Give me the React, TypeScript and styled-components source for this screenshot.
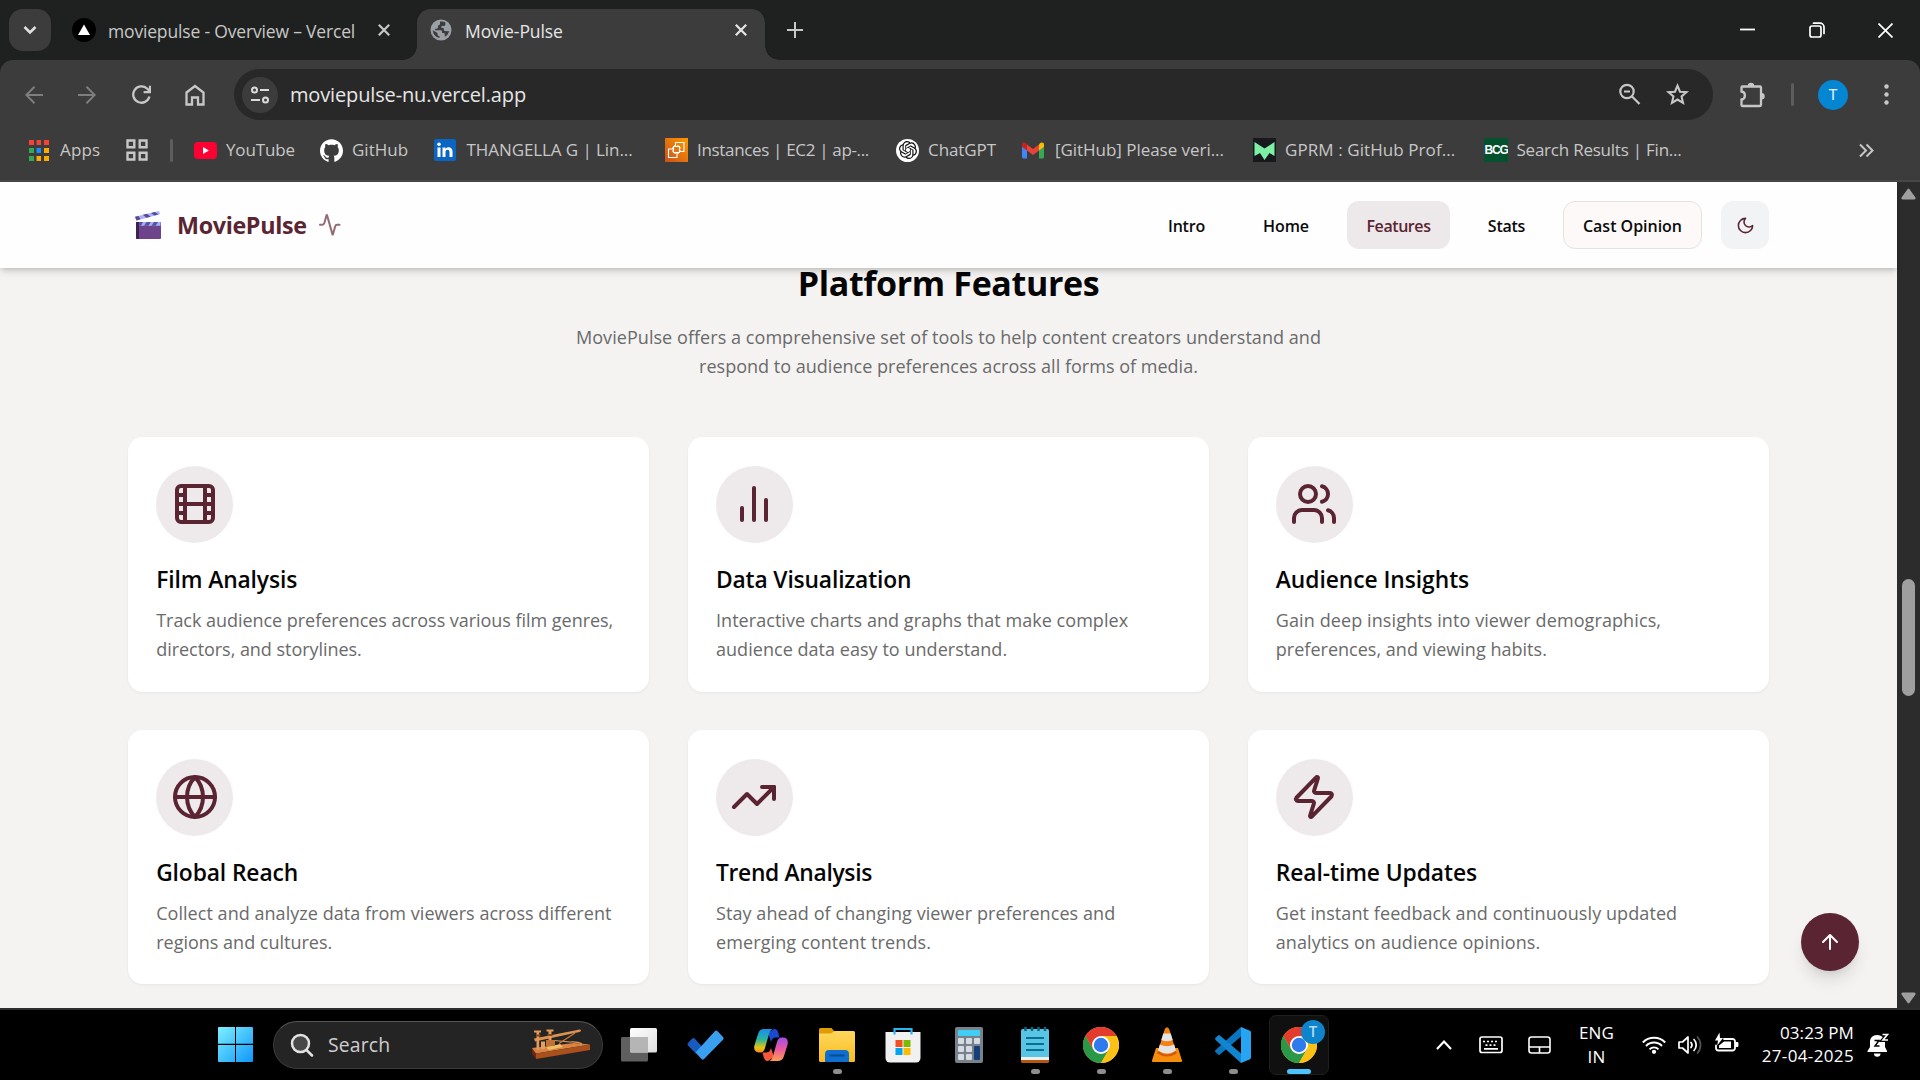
import React from 'react';
import styled, { createGlobalStyle, css } from 'styled-components';
import { SiGithub, SiOpenai } from 'react-icons/si';

const Global = createGlobalStyle`
  * { box-sizing: border-box; }
  body { margin: 0; background: #000; overflow: hidden; }
  svg { display: block; flex: none; }
`;

const wine = '#5a2432';

const Screen = styled.div`
  width: 1920px;
  height: 1080px;
  display: flex;
  flex-direction: column;
  overflow: hidden;
  font-family: 'Open Sans', 'Noto Sans', 'Segoe UI', sans-serif;
`;

const Label = styled.span<{ $ls?: number }>`
  letter-spacing: ${(p) => p.$ls ?? 0}px;
  white-space: nowrap;
`;

/* ---------- Browser tabs ---------- */

const TabStrip = styled.div`
  height: 60px;
  display: flex;
  align-items: flex-start;
  padding: 9px 0 0 9px;
  background: #1f2120;
`;

const TabSearch = styled.div`
  width: 42px;
  height: 42px;
  border-radius: 14px;
  background: #3c3c3c;
  display: grid;
  place-items: center;
`;

const Tab = styled.div<{ $active?: boolean }>`
  display: flex;
  align-items: center;
  height: 51px;
  font-size: 17.5px;
  line-height: 24px;
  padding-bottom: 9px;
  ${(p) =>
    p.$active
      ? css`
          position: relative;
          width: 348px;
          padding-left: 12px;
          padding-right: 18px;
          background: #3c3c3c;
          color: #e6e6e6;
          border-radius: 14px 14px 0 0;
          &::before,
          &::after {
            content: '';
            position: absolute;
            bottom: 0;
            width: 14px;
            height: 14px;
          }
          &::before {
            left: -14px;
            background: radial-gradient(circle at 0 0, transparent 13.5px, #3c3c3c 14px);
          }
          &::after {
            right: -14px;
            background: radial-gradient(circle at 100% 0, transparent 13.5px, #3c3c3c 14px);
          }
        `
      : css`
          width: 366px;
          padding-left: 21px;
          padding-right: 27px;
          color: #c7c7c7;
        `}
`;

const TabTitle = styled(Label)`
  flex: 1;
  margin-left: 12px;
  padding-top: 2px;
`;

const NewTab = styled.div`
  width: 60px;
  height: 42px;
  display: grid;
  place-items: center;
`;

const WindowButtons = styled.div`
  margin: 0 0 0 auto;
  height: 42px;
  display: flex;
`;

const WindowButton = styled.div`
  width: 69px;
  display: grid;
  place-items: center;
`;

/* ---------- Toolbar ---------- */

const ToolbarBack = styled.div`
  background: #1f2120;
`;

const Toolbar = styled.div`
  height: 122px;
  background: #3c3c3c;
  border-radius: 13px 13px 0 0;
  border-bottom: 2px solid #474747;
`;

const AddressRow = styled.div`
  height: 69px;
  padding-top: 9px;
  display: flex;
  align-items: flex-start;
`;

const NavButton = styled.div<{ $w: number }>`
  flex: none;
  width: ${(p) => p.$w}px;
  height: 51px;
  display: grid;
  place-items: center;
`;

const Kebab = styled.div`
  height: 51px;
  margin-left: 36px;
  display: grid;
  place-items: center;
`;

const AddressBar = styled.div`
  flex: none;
  width: 1479px;
  height: 51px;
  border-radius: 26px;
  background: #282828;
  display: flex;
  align-items: center;
  padding: 0 23px 0 8px;
  color: #e6e6e6;
  font-size: 20px;
  line-height: 26px;
`;

const SiteInfo = styled.div`
  width: 36px;
  height: 36px;
  border-radius: 50%;
  background: #3c3c3c;
  display: grid;
  place-items: center;
`;

const Url = styled(Label)`
  flex: 1;
  margin-left: 12px;
`;

const AddressIcons = styled.div`
  display: flex;
  align-items: center;
  gap: 24px;
`;

const Divider = styled.div<{ $m: string }>`
  width: 3px;
  height: 23px;
  border-radius: 2px;
  background: #5d5d5d;
  margin: ${(p) => p.$m};
`;

const Avatar = styled.div`
  width: 30px;
  height: 30px;
  margin-top: 11px;
  border-radius: 50%;
  background: #0586d3;
  color: #e8f4fb;
  font: 15px/30px Roboto, sans-serif;
  text-align: center;
`;

const BookmarkRow = styled.div`
  height: 42px;
  padding-left: 28px;
  display: flex;
  align-items: center;
  font-size: 17px;
  line-height: 24px;
  color: #c7c7c7;
`;

const Bookmark = styled.div<{ $w: number; $gap?: number }>`
  width: ${(p) => p.$w}px;
  display: flex;
  align-items: center;
  gap: ${(p) => p.$gap ?? 10}px;
`;

const BcgLogo = styled.div`
  width: 24px;
  height: 24px;
  background: #04512e;
  color: #fff;
  font: 700 12px/24px 'Liberation Sans', sans-serif;
  letter-spacing: -1.2px;
  text-align: center;
  overflow: hidden;
`;

const White = styled.div`
  width: 23px;
  height: 23px;
  border-radius: 50%;
  background: #fff;
  color: #111;
  display: grid;
  place-items: center;
`;

/* ---------- Page ---------- */

const Viewport = styled.div`
  height: 826px;
  display: flex;
  background: #f4f2f1;
`;

const Page = styled.main`
  width: 1897px;
  height: 826px;
  background: #f4f3f2;
  position: relative;
`;

const Header = styled.header`
  height: 86px;
  padding: 0 128px 0 135px;
  display: flex;
  align-items: center;
  justify-content: space-between;
  background: #fefefe;
  box-shadow: 0 5px 7px -1px rgba(0, 0, 0, 0.12), 0 2px 5px -2px rgba(0, 0, 0, 0.2);
  position: relative;
  z-index: 1;
`;

const Brand = styled.div`
  display: flex;
  align-items: center;
  color: ${wine};
  font-size: 23.3px;
  font-weight: 700;
  line-height: 32px;
`;

const BrandName = styled(Label)`
  margin: 0 11px 1px 16px;
`;

const Nav = styled.nav`
  display: flex;
  align-items: center;
  gap: 19px;
  font-size: 16px;
  font-weight: 600;
  line-height: 22px;
  color: #0a0a0a;
`;

const NavItem = styled.a<{ $w: number; $kind?: 'active' | 'outline' | 'icon' }>`
  width: ${(p) => p.$w}px;
  height: 48px;
  display: flex;
  align-items: center;
  justify-content: center;
  padding-top: 1px;
  border-radius: 12px;
  ${(p) => p.$kind === 'active' && `background: #ede9ea; color: ${wine};`}
  ${(p) => p.$kind === 'outline' && 'background: #fdf9f8; border: 1px solid #e6e2e2;'}
  ${(p) => p.$kind === 'icon' && 'background: #f2f3f5;'}
`;

const Section = styled.section`
  padding: 0 128px;
  display: flex;
  flex-direction: column;
  align-items: center;
`;

const Heading = styled.h2`
  margin: -6px 0 0;
  font-size: 34px;
  font-weight: 700;
  line-height: 43px;
  color: #050505;
`;

const Lead = styled.p`
  margin: 17.6px 0 0;
  display: flex;
  flex-direction: column;
  align-items: center;
  font-size: 18.05px;
  line-height: 29px;
  color: #6a6a6a;
`;

const Grid = styled.div`
  margin-top: 56.4px;
  width: 1641px;
  display: grid;
  grid-template-columns: repeat(3, 1fr);
  gap: 38.2px 38.4px;
`;

const Card = styled.article`
  height: 254.6px;
  padding: 28.8px 28.8px 0 28.2px;
  border-radius: 14.4px;
  background: #fff;
  box-shadow: 0 1px 3px rgba(0, 0, 0, 0.06);
`;

const Disc = styled.div`
  width: 77px;
  height: 77px;
  border-radius: 50%;
  background: #eeeaeb;
  display: grid;
  place-items: center;
`;

const CardTitle = styled.h3`
  margin: 20.4px 0 0;
  font-size: 22.8px;
  font-weight: 600;
  line-height: 33.6px;
  color: #050505;
`;

const CardText = styled.p`
  margin: 9px 0 0;
  display: flex;
  flex-direction: column;
  font-size: 18px;
  line-height: 29px;
  color: #6a6a6a;
`;

const ScrollTop = styled.button`
  position: absolute;
  right: 38px;
  bottom: 37px;
  width: 58px;
  height: 58px;
  padding: 0;
  border: 0;
  border-radius: 50%;
  background: ${wine};
  display: grid;
  place-items: center;
  box-shadow: 0 12px 18px -4px rgba(0, 0, 0, 0.12), 0 5px 8px -5px rgba(0, 0, 0, 0.12);
`;

const Scrollbar = styled.div`
  width: 23px;
  background: #2c2c2c;
  display: flex;
  flex-direction: column;
  align-items: center;
  padding: 6px 0 4px;
`;

const Thumb = styled.div`
  width: 13px;
  height: 117px;
  margin: 379px 0 auto;
  border-radius: 7px;
  background: #9f9f9f;
`;

/* ---------- Taskbar ---------- */

const Taskbar = styled.footer`
  height: 72px;
  border-top: 2px solid #2d2d2d;
  padding-bottom: 1px;
  background: #000;
  display: flex;
  align-items: center;
  color: #fff;
`;

const Start = styled.div`
  width: 273px;
  padding-left: 218px;
`;

const SearchBox = styled.div`
  width: 330px;
  height: 48px;
  border-radius: 24px;
  border: 1.5px solid #3a3a3a;
  border-top-color: #555;
  background: #242424;
  display: flex;
  align-items: center;
  padding: 0 11px 0 16px;
  font-size: 19.4px;
  line-height: 26px;
  color: #cfcfcf;
`;

const SearchLabel = styled(Label)`
  flex: 1;
  margin-left: 14px;
`;

const AppIcons = styled.div`
  display: flex;
  margin-left: 3px;
`;

const AppCell = styled.div`
  width: 66px;
  height: 60px;
  display: grid;
  place-items: center;
  position: relative;
`;

const ActiveTile = styled.div`
  width: 60px;
  height: 60px;
  border-radius: 7px;
  border: 1.5px solid #1e1e1e;
  background: #101010;
  display: grid;
  place-items: center;
`;

const Running = styled.i<{ $active?: boolean }>`
  position: absolute;
  bottom: 1px;
  left: calc(50% - ${(p) => (p.$active ? 12 : 4.5)}px);
  width: ${(p) => (p.$active ? 24 : 9)}px;
  height: 5px;
  border-radius: 3px;
  background: ${(p) => (p.$active ? '#4cc2ff' : '#8e8e8e')};
`;

const ProfileBadge = styled.b`
  position: absolute;
  left: 35px;
  top: 5px;
  width: 24px;
  height: 24px;
  border-radius: 50%;
  background: #0d84cb;
  color: #b9dcf2;
  font: 500 14px/24px Roboto, sans-serif;
  text-align: center;
`;

const Tray = styled.div`
  margin-left: auto;
  padding-right: 30px;
  display: flex;
  align-items: center;
  font-size: 17px;
  line-height: 23.5px;
`;

const TrayCell = styled.div<{ $w: number }>`
  width: ${(p) => p.$w}px;
  display: flex;
  flex-direction: column;
  align-items: center;
`;

const Clock = styled.div`
  width: 104px;
  display: flex;
  flex-direction: column;
  align-items: flex-end;
  padding-bottom: 1px;
  margin-right: 13px;
`;

/* ---------- Icons ---------- */

type StrokeProps = { s: number; w?: number; c?: string; children: React.ReactNode; vb?: string; butt?: boolean };
const Stroke = ({ s, w = 2, c = wine, children, vb = '0 0 24 24', butt }: StrokeProps) => (
  <svg width={s} height={s} viewBox={vb} fill="none" stroke={c} strokeWidth={w}
    strokeLinecap={butt ? 'butt' : 'round'} strokeLinejoin={butt ? 'miter' : 'round'}>
    {children}
  </svg>
);

const CloseIcon = ({ c }: { c: string }) => (
  <Stroke s={12} w={2.2} c={c} vb="0 0 12 12" butt><path d="M.8.8l10.4 10.4M11.2.8L.8 11.2" /></Stroke>
);

const Clapper = () => (
  <svg width="26" height="28" viewBox="0 0 26 28">
    <path d="M0 5.8 24 0l1 3.2L1.5 9.4z" fill="#a6b1ff" />
    <path d="M0 5.8l3.5-.9 2 3.4-4 1.1zM8 3.8l4-1 3.6 3-4.2 1zM16 1.9l4-1 3.4 2.7-4 1z" fill="#5b4a8c" />
    <rect x="1" y="11" width="25" height="17" rx="1" fill="#6d448c" />
    <path d="M4 11h21.5v3.8H4z" fill="#9cb2fa" />
    <path d="M4 11h4l-2 3.8H4zM11.500 11h4.300l-2.300 3.800H9zM19 11h4l-2.300 3.800h-4.200z" fill="#5f4f9a" />
    <path d="M1 11h3v17H2a1 1 0 0 1-1-1z" fill="#3c2350" />
  </svg>
);

const Chrome = () => (
  <svg width="36" height="36" viewBox="0 0 48 48">
    <circle cx="24" cy="24" r="24" fill="#fbc116" />
    <path d="M3.200 12A24 24 0 0 1 44.800 12H24L13.600 30z" fill="#e33b2e" />
    <path d="M3.200 12A24 24 0 0 0 24 48L34.400 30H13.600z" fill="#2b9847" />
    <path d="M24 12h20.800A24 24 0 0 1 24 48l10.400-18z" fill="#fbc116" />
    <circle cx="24" cy="24" r="12" fill="#fff" />
    <circle cx="24" cy="24" r="9.600" fill="#2f7bee" />
  </svg>
);

const Morse = () => (
  <svg width="59" height="31" viewBox="0 0 59 31">
    <path d="M0 19l4 5v6l-4-5z" fill="#6e2712" />
    <path d="M0 19l42-5 16 1.500L4 24.500z" fill="#d98445" />
    <path d="M4 24.500l54-9v5.500L4 30z" fill="#a9501d" />
    <path d="M14 18.500l14-3.500 3 3-14 3z" fill="#edc163" />
    <path d="M2 9.500L44 1.200q5-1.400 5 .3t-4 2L3 12.500z" fill="#dc924f" />
    <path d="M22 11.500l16 1.500q8-.5 12 2" stroke="#e09a58" strokeWidth="1.200" fill="none" />
    <path d="M27 14.500L43 4" stroke="#c9793a" strokeWidth="1.200" />
    <path d="M2 1.500h7v2H7.200V21H4.500V3.500H2z" fill="#df9a5c" />
    <path d="M14.500.5h7v2h-2V15h-3V2.500h-2z" fill="#df9a5c" />
    <path d="M4 5.500h4.500v2H4zM15.500 5h5v2h-5z" fill="#8c4519" />
    <path d="M9 12.500h4V20H9z" fill="#e3a064" />
    <path d="M14 11h9v6h-9z" fill="#bf7233" />
  </svg>
);

const icons = {
  film: <><rect width="18" height="18" x="3" y="3" rx="2" /><path d="M7 3v18M3 7.500h4M3 12h18M3 16.500h4M17 3v18M17 7.500h4M17 16.500h4" /></>,
  chart: <path d="M12 20V4M18 20V10M6 20v-6" />,
  users: <><path d="M16 21v-2a4 4 0 0 0-4-4H6a4 4 0 0 0-4 4v2" /><circle cx="9" cy="7" r="4" /><path d="M22 21v-2a4 4 0 0 0-3-3.870M16 3.130a4 4 0 0 1 0 7.750" /></>,
  globe: <><circle cx="12" cy="12" r="10" /><path d="M12 2a14.500 14.500 0 0 0 0 20 14.500 14.500 0 0 0 0-20M2 12h20" /></>,
  trend: <><path d="M22 7l-8.500 8.500-5-5L2 17" /><path d="M16 7h6v6" /></>,
  zap: <path d="M4 14a1 1 0 0 1-.78-1.630l9.900-10.200a.5.5 0 0 1 .86.460l-1.920 6.020A1 1 0 0 0 13 10h7a1 1 0 0 1 .78 1.630l-9.900 10.200a.5.5 0 0 1-.86-.460l1.920-6.020A1 1 0 0 0 11 14z" />,
};

type Line = [string, number];
const features: { icon: keyof typeof icons; title: Line; text: Line[] }[] = [
  { icon: 'film', title: ['Film Analysis', -0.11], text: [['Track audience preferences across various film genres,', -0.038], ['directors, and storylines.', -0.04]] },
  { icon: 'chart', title: ['Data Visualization', -0.15], text: [['Interactive charts and graphs that make complex', 0.05], ['audience data easy to understand.', 0.04]] },
  { icon: 'users', title: ['Audience Insights', -0.05], text: [['Gain deep insights into viewer demographics,', 0.1], ['preferences, and viewing habits.', 0.02]] },
  { icon: 'globe', title: ['Global Reach', -0.11], text: [['Collect and analyze data from viewers across different', 0.042], ['regions and cultures.', 0]] },
  { icon: 'trend', title: ['Trend Analysis', -0.31], text: [['Stay ahead of changing viewer preferences and', 0.078], ['emerging content trends.', 0.11]] },
  { icon: 'zap', title: ['Real-time Updates', -0.08], text: [['Get instant feedback and continuously updated', 0.085], ['analytics on audience opinions.', 0.07]] },
];

const gray = '#c7c7c7';

const bookmarks: { w: number; gap?: number; ls: number; text: string; icon: React.ReactNode }[] = [
  { w: 126, gap: 9, ls: -0.13, text: 'YouTube', icon: <svg width="23" height="17" viewBox="0 0 23 17"><rect width="23" height="17" rx="4" fill="#ff0033" /><path d="M9 5l6 3.500L9 12z" fill="#fff" /></svg> },
  { w: 114, gap: 9, ls: 0, text: 'GitHub', icon: <SiGithub size={23} color="#fff" /> },
  { w: 231, gap: 10.5, ls: -0.08, text: 'THANGELLA G | Lin...', icon: <svg width="22" height="22" viewBox="0 0 22 22"><rect width="22" height="22" rx="2" fill="#0a66c2" /><path d="M3.500 8.500h3V18h-3zM8.500 8.500h3V10c1.600-2.700 7-2.300 7 2.500V18h-3v-5c0-3-4-2.800-4 0v5h-3z" fill="#fff" /><circle cx="5" cy="5.200" r="1.800" fill="#fff" /></svg> },
  { w: 231, gap: 9, ls: -0.33, text: 'Instances | EC2 | ap-...', icon: (
    <svg width="23" height="24" viewBox="0 0 23 24"><defs><linearGradient id="ec2" x1="0" y1="1" x2="1" y2="0"><stop stopColor="#c8511b" /><stop offset="1" stopColor="#f90" /></linearGradient></defs><rect width="23" height="24" fill="url(#ec2)" /><path d="M8.500 8.500h6v6h-6zM10.500 8V4.500H19v9h-4M8 11H3.500v8.500H12V15M10 7v1.500M13 7v1.500M10 14.500V16M13 14.500V16M7 10h1.500M7 13h1.500M14.500 10H16M14.500 13H16" fill="none" stroke="#fff" strokeWidth="1.100" /></svg>
  ) },
  { w: 126, gap: 9, ls: -0.08, text: 'ChatGPT', icon: <White><SiOpenai size={18} /></White> },
  { w: 231, gap: 11, ls: -0.04, text: '[GitHub] Please veri...', icon: (
    <svg width="22" height="17" viewBox="0 0 22 17"><path d="M0 2.500V15a1.500 1.500 0 0 0 1.500 1.500H5V6z" fill="#4285f4" /><path d="M17 6v10.500h3.500A1.500 1.500 0 0 0 22 15V2.500z" fill="#34a853" /><path d="M5 2.500v6l6 4.500 6-4.500v-6L11 7z" fill="#ea4335" /><path d="M0 2.500v2.200l5 3.800v-6L4 1.200C2-.2 0 .7 0 2.500z" fill="#c5221f" /><path d="M22 2.500v2.200l-5 3.800v-6l1-1.300c2-1.400 4-.5 4 1.300z" fill="#fbbc04" /></svg>
  ) },
  { w: 231, gap: 9, ls: 0.08, text: 'GPRM : GitHub Prof...', icon: <svg width="23" height="24" viewBox="0 0 23 24"><rect width="23" height="24" fill="#17191c" /><path d="M1.500 4l10 6.500 10-6.500v14l-5-3-5 7-4.500-7-5.500 3z" fill="#7df0a6" /></svg> },
  { w: 375, gap: 8.5, ls: -0.23, text: 'Search Results | Fin...', icon: <BcgLogo>BCG</BcgLogo> },
];

const StoreBag = () => (
  <svg width="36" height="36" viewBox="0 0 36 36"><path d="M9.500 8V2h17v6" fill="none" stroke="#29b6f0" strokeWidth="2.200" /><path d="M.5 5h35v26a4.500 4.500 0 0 1-4.500 4.500H5A4.500 4.500 0 0 1 .5 31z" fill="#f1f1f1" /><path d="M9.500 7.500V5M26.500 7.500V5" stroke="#29b6f0" strokeWidth="2.200" /><path d="M10.500 13h7v7h-7z" fill="#f25022" /><path d="M18.500 13h7v7h-7z" fill="#7fba00" /><path d="M10.500 21h7v7h-7z" fill="#00a4ef" /><path d="M18.500 21h7v7h-7z" fill="#ffb900" /></svg>
);

const apps: { icon: React.ReactNode; running?: boolean }[] = [
  { icon: <svg width="36" height="34" viewBox="0 0 36 34"><defs><linearGradient id="tv1" x1="0" y1="0" x2="1" y2="1"><stop stopColor="#fff" /><stop offset="1" stopColor="#dedede" /></linearGradient></defs><rect x="0" y="9" width="27" height="24.500" rx="1.500" fill="#5f5f5f" /><rect x="9" y="0" width="27" height="24.500" rx="1.500" fill="url(#tv1)" /><path d="M9 9h18v15.500H10.500A1.500 1.500 0 0 1 9 23z" fill="#b5b5b5" /></svg> },
  { icon: <svg width="37" height="30" viewBox="0 0 37 30"><path d="M1 15.500a2 2 0 0 1 0-2.500l4-4.200a2 2 0 0 1 2.800 0L15.500 17 9 23.800z" fill="#195abd" /><path d="M8.500 22.500L27.800 1.300a2 2 0 0 1 2.800 0L36 7a2 2 0 0 1 0 2.700L17.300 28.700a2 2 0 0 1-3 0z" fill="#3b9ff0" /></svg> },
  { icon: (
    <svg width="34" height="32" viewBox="0 0 34 32"><defs><linearGradient id="cp1" x1="0" y1="0" x2="0" y2="1"><stop stopColor="#1a8dee" /><stop offset=".45" stopColor="#2bb59a" /><stop offset=".8" stopColor="#e9c50c" /><stop offset="1" stopColor="#f88a2c" /></linearGradient><linearGradient id="cp2" x1="0" y1="0" x2="0" y2="1"><stop stopColor="#a14ee8" /><stop offset=".5" stopColor="#ea5aa0" /><stop offset="1" stopColor="#fda04e" /></linearGradient></defs>
      <path d="M20 0c3 0 3.800 1.800 4.500 4.500l1 4H22c-3 0-4 1.500-5 4.500L14 4z" fill="#1b48ce" /><path d="M14 32c-3 0-3.800-1.800-4.500-4.500l-1-4H12c3 0 4-1.500 5-4.500l3 9z" fill="#f5583c" />
      <path d="M10.500 0H20c-3 0-4 2-5 5l-4 14c-.9 3-2 4.500-5 4.500H5c-4 0-5.500-3-4.600-7L4 5C5 1.500 7 0 10.500 0z" fill="url(#cp1)" /><path d="M23.500 32H14c3 0 4-2 5-5l4-14c.9-3 2-4.500 5-4.500h1c4 0 5.500 3 4.600 7L30 27c-1 3.500-3 5-6.500 5z" fill="url(#cp2)" /></svg>
  ) },
  { running: true, icon: <svg width="36" height="34" viewBox="0 0 36 34"><defs><linearGradient id="fd" x1="0" y1="0" x2="0" y2="1"><stop stopColor="#ffd75e" /><stop offset="1" stopColor="#f9bd1f" /></linearGradient></defs><path d="M0 1.500A1.500 1.500 0 0 1 1.500 0h11l3 3.500H20V12H0z" fill="#df9c05" /><path d="M0 5.500h12L15.500 3H34.500A1.500 1.500 0 0 1 36 4.500v28a1.500 1.500 0 0 1-1.500 1.500h-33A1.500 1.500 0 0 1 0 32.500z" fill="url(#fd)" /><path d="M6 34V26a4 4 0 0 1 4-4h16a4 4 0 0 1 4 4v8z" fill="#0f6fd0" /><path d="M10.500 27.500h15" stroke="#0a4a93" strokeWidth="2" /></svg> },
  { icon: <StoreBag /> },
  { icon: <svg width="28" height="36" viewBox="0 0 28 36"><rect width="28" height="36" rx="2" fill="#78828b" /><rect x="3" y="3" width="22" height="6" rx="1" fill="#42cdf5" /><g fill="#d4dbe2"><rect x="3" y="11" width="6" height="6" rx="1" /><rect x="11" y="11" width="6" height="6" rx="1" /><rect x="19" y="11" width="6" height="6" rx="1" /><rect x="3" y="19" width="6" height="6" rx="1" /><rect x="11" y="19" width="6" height="6" rx="1" /><rect x="3" y="27" width="6" height="6" rx="1" /><rect x="11" y="27" width="6" height="6" rx="1" /></g><rect x="19" y="19" width="6" height="14" rx="1" fill="#153f78" /></svg> },
  { running: true, icon: <svg width="28" height="36" viewBox="0 0 28 36"><rect y="2" width="28" height="32" rx="1.500" fill="#58c5e4" /><path d="M0 30h28v4.500a1.500 1.500 0 0 1-1.500 1.500h-25A1.500 1.500 0 0 1 0 34.500z" fill="#b5560f" /><path d="M0 30h28v3H0z" fill="#eee" /><path d="M4.500 0v4M11 0v4M17.500 0v4M24 0v4" stroke="#0b6686" strokeWidth="2.500" /><path d="M5 11h18M5 17h18M5 23h18" stroke="#0b6f93" strokeWidth="2" /></svg> },
  { running: true, icon: <Chrome /> },
  { running: true, icon: <svg width="30" height="35" viewBox="0 0 30 35"><path d="M4 21h22l4 12.500a1 1 0 0 1-1 1.500H1a1 1 0 0 1-1-1.500z" fill="#f78d0c" /><path d="M12.800 2Q15-1.500 17.200 2L24 24q-9 7-18 0z" fill="#f57f10" /><path d="M11.300 6.500h7.400l2 6.500q-5.700 2.500-11.400 0zM7.800 17.500q7.200 3.500 14.400 0l1.800 6q-9 6-18 0z" fill="#e4e4e4" /><path d="M6 24q9 7 18 0l.8 2.500q-9.800 6-19.600 0z" fill="#d4570c" /></svg> },
  { running: true, icon: <svg width="36" height="36" viewBox="0 0 36 36"><path d="M26 0v9.500L5 27.500a1.500 1.500 0 0 1-2 0L.6 25.300a1.500 1.500 0 0 1 0-2.200z" fill="#0a75bd" /><path d="M26 36v-9.500L5 8.500a1.500 1.500 0 0 0-2 0L.6 10.700a1.500 1.500 0 0 0 0 2.200z" fill="#1185cf" /><path d="M26 0l9 3.800a2 2 0 0 1 1 1.800v24.800a2 2 0 0 1-1 1.800L26 36z" fill="#27a4f2" /></svg> },
];

export default function App() {
  return (
    <Screen>
      <Global />
      <TabStrip>
        <TabSearch><Stroke s={14} w={2.600} c="#e0e0e0" vb="0 0 14 14" butt><path d="M1.500 4L7 9.500 12.500 4" /></Stroke></TabSearch>
        <Tab>
          <svg width="24" height="24" viewBox="0 0 24 24"><circle cx="12" cy="12" r="12" fill="#000" /><path d="M12 6.500l6 10.500H6z" fill="#fff" /></svg>
          <TabTitle $ls={-0.17}>moviepulse - Overview – Vercel</TabTitle>
          <CloseIcon c={gray} />
        </Tab>
        <Tab $active>
          <svg width="24" height="24" viewBox="0 0 24 24"><circle cx="12" cy="12" r="10.500" fill="#9aa0a6" /><path d="M11 3.600v2.200c0 1.200-1 1.600-2 1.700v2c0 .8-.6 1.200-1.400 1.200H6v1.500h5.500c1 0 1.500.6 1.500 1.500V15h1.500c.7 0 1.200.4 1.200 1.200v2.500a8.300 8.300 0 0 0 4.500-5.500l-4.200-.2c-.8 0-1.200-.5-1.200-1.200V10h-2.300V8h2.300c1 0 1.500-.6 1.500-1.500V4.200A8.400 8.400 0 0 0 11 3.600zM3.700 12.300A8.400 8.400 0 0 0 10.500 20v-1.800c-1.200 0-2-.8-2-2V15z" fill="#3c3c3c" /></svg>
          <TabTitle $ls={-0.08}>Movie-Pulse</TabTitle>
          <CloseIcon c="#e6e6e6" />
        </Tab>
        <NewTab><Stroke s={16} w={2} c={gray} vb="0 0 16 16" butt><path d="M8 0v16M0 8h16" /></Stroke></NewTab>
        <WindowButtons>
          <WindowButton><Stroke s={15} w={1.800} c="#fff" vb="0 0 15 15" butt><path d="M0 6.500h15" /></Stroke></WindowButton>
          <WindowButton><Stroke s={16} w={1.700} c="#fff" vb="0 0 16 16"><rect x="1" y="4" width="11" height="11" rx="2" /><path d="M4.500 1.200H11A4 4 0 0 1 15 5v6.500" /></Stroke></WindowButton>
          <WindowButton><Stroke s={15} w={1.700} c="#fff" vb="0 0 15 15" butt><path d="M.5.5l14 14M14.500.5l-14 14" /></Stroke></WindowButton>
        </WindowButtons>
      </TabStrip>

      <ToolbarBack>
        <Toolbar>
          <AddressRow>
            <NavButton $w={67}><Stroke s={18} w={2} c="#7e7e7e" vb="0 0 18 18" butt><path d="M18 9H1.500M9.500.8L1.300 9l8.200 8.200" /></Stroke></NavButton>
            <NavButton $w={40}><Stroke s={18} w={2} c="#7e7e7e" vb="0 0 18 18" butt><path d="M0 9h16.500M8.500.8L16.700 9l-8.200 8.200" /></Stroke></NavButton>
            <NavButton $w={68}><Stroke s={19} w={2.300} c={gray} vb="0 0 19 19" butt><path d="M17.400 11.500A8.200 8.200 0 1 1 15 3.500l2.700 2.700M18 .8v6.400h-6.400" /></Stroke></NavButton>
            <NavButton $w={40}><Stroke s={22} w={2.300} c={gray} vb="0 0 22 22" butt><path d="M2.500 8.500L11 2l8.500 6.500V20.500H14v-7H8v7H2.500z" /></Stroke></NavButton>
            <NavButton $w={19} />
            <AddressBar>
              <SiteInfo><Stroke s={18} w={2} c="#dcdcdc" vb="0 0 18 18" butt><circle cx="3.500" cy="4" r="2.500" /><path d="M9 4h9M0 14h9" /><circle cx="14.500" cy="14" r="2.500" /></Stroke></SiteInfo>
              <Url $ls={-0.143}>moviepulse-nu.vercel.app</Url>
              <AddressIcons>
                <Stroke s={23} w={2.200} c={gray} vb="0 0 23 23" butt><circle cx="9" cy="8.500" r="6.700" /><path d="M13.800 13.300L21.500 21M6 8.500h6" /></Stroke>
                <Stroke s={25} w={2} c={gray} vb="0 0 24 24" butt><path d="M12 3.500l2.400 5.800 6.200.5-4.700 4.100 1.400 6.100L12 16.800 6.700 20l1.400-6.100-4.700-4.100 6.200-.5z" /></Stroke>
              </AddressIcons>
            </AddressBar>
            <NavButton $w={78}>
              <svg width="26" height="26" viewBox="0 0 26 26"><path d="M3.500 4.500H21a1 1 0 0 1 1 1V23a1 1 0 0 1-1 1H3.500a1 1 0 0 1-1-1v-5.500c4.500-.5 4.500-7.500 0-8V5.500a1 1 0 0 1 1-1z" fill="none" stroke={gray} strokeWidth="2.300" /><path d="M8.800 4a3.200 3.200 0 0 1 6.400 0zM22.500 11a3.200 3.200 0 0 1 0 6.400z" fill={gray} /></svg>
            </NavButton>
            <Divider $m="14px 24px 0 0" />
            <Avatar>T</Avatar>
            <Kebab><svg width="5" height="21" viewBox="0 0 5 21" fill={gray}><circle cx="2.500" cy="2.500" r="2.200" /><circle cx="2.500" cy="10.500" r="2.200" /><circle cx="2.500" cy="18.500" r="2.200" /></svg></Kebab>
          </AddressRow>
          <BookmarkRow>
            <Bookmark $w={98} $gap={11}>
              <svg width="21" height="21" viewBox="0 0 21 21"><path d="M1 0h5v5H1zM8.500 0h4.500v5H8.500zM16 0h5v5h-5z" fill="#f44336" /><path d="M1 8h5v5H1zM1 16h5v5H1z" fill="#34a853" /><path d="M8.500 8h4.500v5H8.500z" fill="#1a8cff" /><path d="M16 8h5v5h-5zM8.500 16h4.500v5H8.500zM16 16h5v5h-5z" fill="#fbab04" /></svg>
              <Label $ls={0.15}>Apps</Label>
            </Bookmark>
            <Stroke s={22} w={2.400} c={gray} vb="0 0 22 22" butt><path d="M1.500 1.500h6.800v6.800H1.500zM13.700 1.500h6.800v6.800h-6.800zM1.500 13.700h6.800v6.800H1.500zM13.700 13.700h6.800v6.800h-6.800z" /></Stroke>
            <Divider $m="0 21px 0 22px" />
            {bookmarks.map((b) => (
              <Bookmark key={b.text} $w={b.w} $gap={b.gap}>{b.icon}<Label $ls={b.ls}>{b.text}</Label></Bookmark>
            ))}
            <Stroke s={15} w={2} c={gray} vb="0 0 15 15" butt><path d="M1 1.500l6 6-6 6M7.500 1.500l6 6-6 6" /></Stroke>
          </BookmarkRow>
        </Toolbar>
      </ToolbarBack>

      <Viewport>
        <Page>
          <Header>
            <Brand>
              <Clapper />
              <BrandName $ls={-0.33}>MoviePulse</BrandName>
              <Stroke s={23.500} w={2} c="#916c75"><path d="M22 12h-2.480a2 2 0 0 0-1.930 1.460l-2.350 8.360a.25.25 0 0 1-.48 0L9.240 2.180a.25.25 0 0 0-.48 0l-2.350 8.360A2 2 0 0 1 4.490 12H2" /></Stroke>
            </Brand>
            <Nav>
              <NavItem $w={77}><Label $ls={-0.2}>Intro</Label></NavItem>
              <NavItem $w={84}><Label $ls={-0.07}>Home</Label></NavItem>
              <NavItem $w={103} $kind="active"><Label $ls={-0.43}>Features</Label></NavItem>
              <NavItem $w={75}><Label $ls={-0.25}>Stats</Label></NavItem>
              <NavItem $w={139} $kind="outline"><Label $ls={-0.02}>Cast Opinion</Label></NavItem>
              <NavItem $w={48} $kind="icon"><Stroke s={19} w={2}><path d="M12 3a6 6 0 0 0 9 9 9 9 0 1 1-9-9Z" /></Stroke></NavItem>
            </Nav>
          </Header>
          <Section>
            <Heading><Label $ls={-0.37}>Platform Features</Label></Heading>
            <Lead>
              <Label $ls={0.04}>MoviePulse offers a comprehensive set of tools to help content creators understand and</Label>
              <Label>respond to audience preferences across all forms of media.</Label>
            </Lead>
            <Grid>
              {features.map((f) => (
                <Card key={f.icon}>
                  <Disc><Stroke s={48}>{icons[f.icon]}</Stroke></Disc>
                  <CardTitle><Label $ls={f.title[1]}>{f.title[0]}</Label></CardTitle>
                  <CardText>{f.text.map((t) => <Label key={t[0]} $ls={t[1]}>{t[0]}</Label>)}</CardText>
                </Card>
              ))}
            </Grid>
          </Section>
          <ScrollTop aria-label="Back to top"><Stroke s={24} w={2} c="#fff"><path d="M5 12l7-7 7 7M12 19V5" /></Stroke></ScrollTop>
        </Page>
        <Scrollbar>
          <svg width="15" height="12" viewBox="0 0 15 12"><path d="M6.500 1.200q1-1.400 2 0l5.800 8q1 2-1 2.300H1.700q-2-.3-1-2.300z" fill="#9f9f9f" /></svg>
          <Thumb />
          <svg width="15" height="12" viewBox="0 0 15 12"><path d="M6.500 10.800q1 1.400 2 0l5.800-8q1-2-1-2.300H1.700q-2 .3-1 2.300z" fill="#9f9f9f" /></svg>
        </Scrollbar>
      </Viewport>

      <Taskbar>
        <Start>
          <svg width="35" height="35" viewBox="0 0 35 35"><defs><linearGradient id="win" x1="0" y1="0" x2="1" y2="1"><stop stopColor="#7df0fd" /><stop offset="1" stopColor="#0f97fb" /></linearGradient></defs><path d="M1 0h16v16.800H0V1a1 1 0 0 1 1-1zM18 0h16a1 1 0 0 1 1 1v15.800H18zM0 18h17v17H1a1 1 0 0 1-1-1zM18 18h17v16a1 1 0 0 1-1 1H18z" fill="url(#win)" /></svg>
        </Start>
        <SearchBox>
          <Stroke s={24} w={2.500} c="#e3e3e3" vb="0 0 24 24"><circle cx="10.500" cy="10.500" r="8.500" fill="#484848" /><path d="M16.500 17l5.500 5.500" /></Stroke>
          <SearchLabel $ls={0.14}>Search</SearchLabel>
          <Morse />
        </SearchBox>
        <AppIcons>
          {apps.map((a, i) => (
            <AppCell key={i}>{a.icon}{a.running && <Running />}</AppCell>
          ))}
          <AppCell>
            <ActiveTile><Chrome /></ActiveTile>
            <ProfileBadge>T</ProfileBadge>
            <Running $active />
          </AppCell>
        </AppIcons>
        <Tray>
          <TrayCell $w={46}><Stroke s={16} w={2.200} c="#fff" vb="0 0 16 16" butt><path d="M1 12l7-7.500L15 12" /></Stroke></TrayCell>
          <TrayCell $w={48}><svg width="24" height="18" viewBox="0 0 24 18"><rect x="1" y="1" width="22" height="15.500" rx="2" fill="none" stroke="#fff" strokeWidth="1.700" /><path d="M4 5.500h2M8 5.500h2M12 5.500h2M16 5.500h2M6.500 9.200h2M10.500 9.200h2M14.500 9.200h2M5 12.800h14" stroke="#fff" strokeWidth="1.700" /></svg></TrayCell>
          <TrayCell $w={48}><svg width="23" height="18" viewBox="0 0 23 18"><rect x="1" y="1" width="21" height="16" rx="2.500" fill="none" stroke="#fff" strokeWidth="1.600" /><path d="M1 11h21M11.500 11v6" stroke="#fff" strokeWidth="1.600" /></svg></TrayCell>
          <TrayCell $w={67}><Label $ls={0.13}>ENG</Label><Label $ls={0.2}>IN</Label></TrayCell>
          <TrayCell $w={48}><Stroke s={24} w={1.900} c="#fff" butt><path d="M.8 9.500a15.500 15.500 0 0 1 22.400 0M4 13a11 11 0 0 1 16 0M7.500 16.300a6.300 6.300 0 0 1 9 0" /><circle cx="12" cy="18.800" r="1.200" fill="#fff" /></Stroke></TrayCell>
          <TrayCell $w={24}><Stroke s={24} w={1.700} c="#fff"><path d="M1 9h3.500L10 4v16l-5.500-5H1zM13 9.500a4 4 0 0 1 0 5M16 6.500a8 8 0 0 1 0 11" /><path d="M19.500 4a12 12 0 0 1 0 16" stroke="#555" /></Stroke></TrayCell>
          <TrayCell $w={48}><Stroke s={25} w={1.800} c="#fff" vb="0 0 25 24"><path d="M10 6.500h8.500a2.500 2.500 0 0 1 2.500 2.500v6.500a2.500 2.500 0 0 1-2.500 2.500h-14A2.500 2.500 0 0 1 2 15.500V13" /><path d="M22 10.500h1.500v3H22z" fill="#fff" /><path d="M10 9h7v6.500H5v-2.500z" fill="#fff" stroke="none" /><path d="M5.500 0L1 8h3l-.8 5L9 5.500H6z" fill="#fff" stroke="none" /></Stroke></TrayCell>
          <Clock><Label $ls={0.09}>03:23 PM</Label><Label $ls={0.36}>27-04-2025</Label></Clock>
          <svg width="23" height="24" viewBox="0 0 23 24"><path d="M10 2C5.500 2 3 5 3 9v5l-2.500 4v1h19.500v-1L18 14V9c0-4-3.500-7-8-7zM7 20.500h6.500a3.200 3.200 0 0 1-6.500 0z" fill="#fff" /><path d="M7.500 7.500h4.500l-4 5.500h4.500" fill="none" stroke="#000" strokeWidth="1.500" /><path d="M15.500 1.500h5l-4.500 5.500h5" fill="none" stroke="#000" strokeWidth="4" /><path d="M15.500 1.500h5l-4.500 5.500h5" fill="none" stroke="#fff" strokeWidth="1.600" /></svg>
        </Tray>
      </Taskbar>
    </Screen>
  );
}
